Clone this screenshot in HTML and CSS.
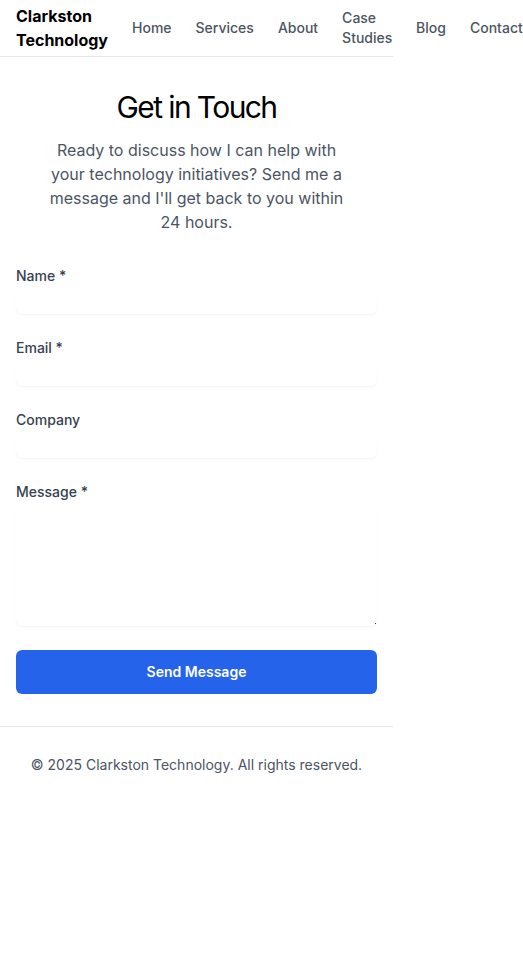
FILE: index.html
```html
<!DOCTYPE html>
<html lang="en">
<head>
<meta charset="utf-8">
<title>Contact - Clarkston Technology</title>
<link rel="stylesheet" href="styles.css">
</head>
<body>
<div class="page">
  <header class="site-header">
    <a class="logo" href="#">Clarkston Technology</a>
    <nav class="nav">
      <a href="#">Home</a>
      <a href="#">Services</a>
      <a href="#">About</a>
      <a href="#" class="wrap">Case Studies</a>
      <a href="#">Blog</a>
      <a href="#">Contact</a>
    </nav>
  </header>
  <main class="main">
    <h1 class="title">Get in Touch</h1>
    <p class="intro">Ready to discuss how I can help with your technology initiatives? Send me a message and I'll get back to you within 24 hours.</p>
    <form class="form">
      <div class="field">
        <label for="name">Name *</label>
        <input id="name" type="text">
      </div>
      <div class="field">
        <label for="email">Email *</label>
        <input id="email" type="email">
      </div>
      <div class="field">
        <label for="company">Company</label>
        <input id="company" type="text">
      </div>
      <div class="field">
        <label for="message">Message *</label>
        <div class="textarea-wrap">
          <textarea id="message" rows="5"></textarea>
          <span class="grip"></span>
        </div>
      </div>
      <button type="button" class="submit">Send Message</button>
    </form>
  </main>
  <footer class="footer">
    <p>© 2025 Clarkston Technology. All rights reserved.</p>
  </footer>
</div>
</body>
</html>
```
FILE: styles.css
```css
* { box-sizing: border-box; }
html, body { margin: 0; padding: 0; background: #fff; }
body {
  font-family: Inter, "Noto Sans", "Liberation Sans", sans-serif;
  color: #111;
}
.page { width: 393px; }
.site-header {
  height: 57px;
  border-bottom: 1px solid #e5e7eb;
  padding: 0 16px;
  display: flex;
  align-items: center;
  gap: 24px;
}
.logo {
  font-size: 16px;
  line-height: 24px;
  font-weight: 700;
  color: #000;
  text-decoration: none;
  width: 92px;
  flex-shrink: 0;
  margin-top: -1px;
}
.nav {
  display: flex;
  align-items: center;
  gap: 24px;
  flex-shrink: 0;
}
.nav a {
  font-size: 14px;
  line-height: 20px;
  font-weight: 500;
  color: #4b5563;
  text-decoration: none;
  white-space: nowrap;
}
.nav a.wrap { white-space: normal; width: 50px; }
.main { padding: 32px 16px 32px; }
.title {
  margin: 0 0 13px;
  text-align: center;
  font-size: 30px;
  line-height: 36px;
  font-weight: 400;
  letter-spacing: -1.6px;
  color: #000;
}
.intro {
  margin: 0 auto;
  max-width: 302px;
  text-align: center;
  font-size: 16px;
  line-height: 24px;
  color: #4b5563;
}
.form {
  margin-top: 32px;
  display: flex;
  flex-direction: column;
  gap: 24px;
}
.field { display: flex; flex-direction: column; gap: 4px; }
.field label {
  font-size: 14px;
  line-height: 20px;
  font-weight: 500;
  color: #374151;
}
.field input, .field textarea {
  display: block;
  width: 100%;
  border: 0;
  padding: 0;
  margin: 0;
  font: inherit;
  font-size: 16px;
  line-height: 24px;
  border-radius: 6px;
  background: #fff;
  box-shadow: 0 1px 2px 0 rgba(0,0,0,0.05);
  outline: none;
}
.field input { height: 24px; }
.textarea-wrap { position: relative; }
.field textarea { height: 120px; resize: none; }
.grip {
  position: absolute;
  right: 1px;
  bottom: 2px;
  width: 1px;
  height: 1px;
  background: #333;
}
.submit {
  height: 44px;
  width: 100%;
  border: 0;
  border-radius: 6px;
  background: #2563eb;
  color: #fff;
  font-family: inherit;
  font-size: 14px;
  line-height: 20px;
  font-weight: 600;
}
.footer {
  border-top: 1px solid #e5e7eb;
  padding: 28px 16px;
}
.footer p {
  margin: 0;
  text-align: center;
  font-size: 14px;
  line-height: 20px;
  color: #4b5563;
}
```
